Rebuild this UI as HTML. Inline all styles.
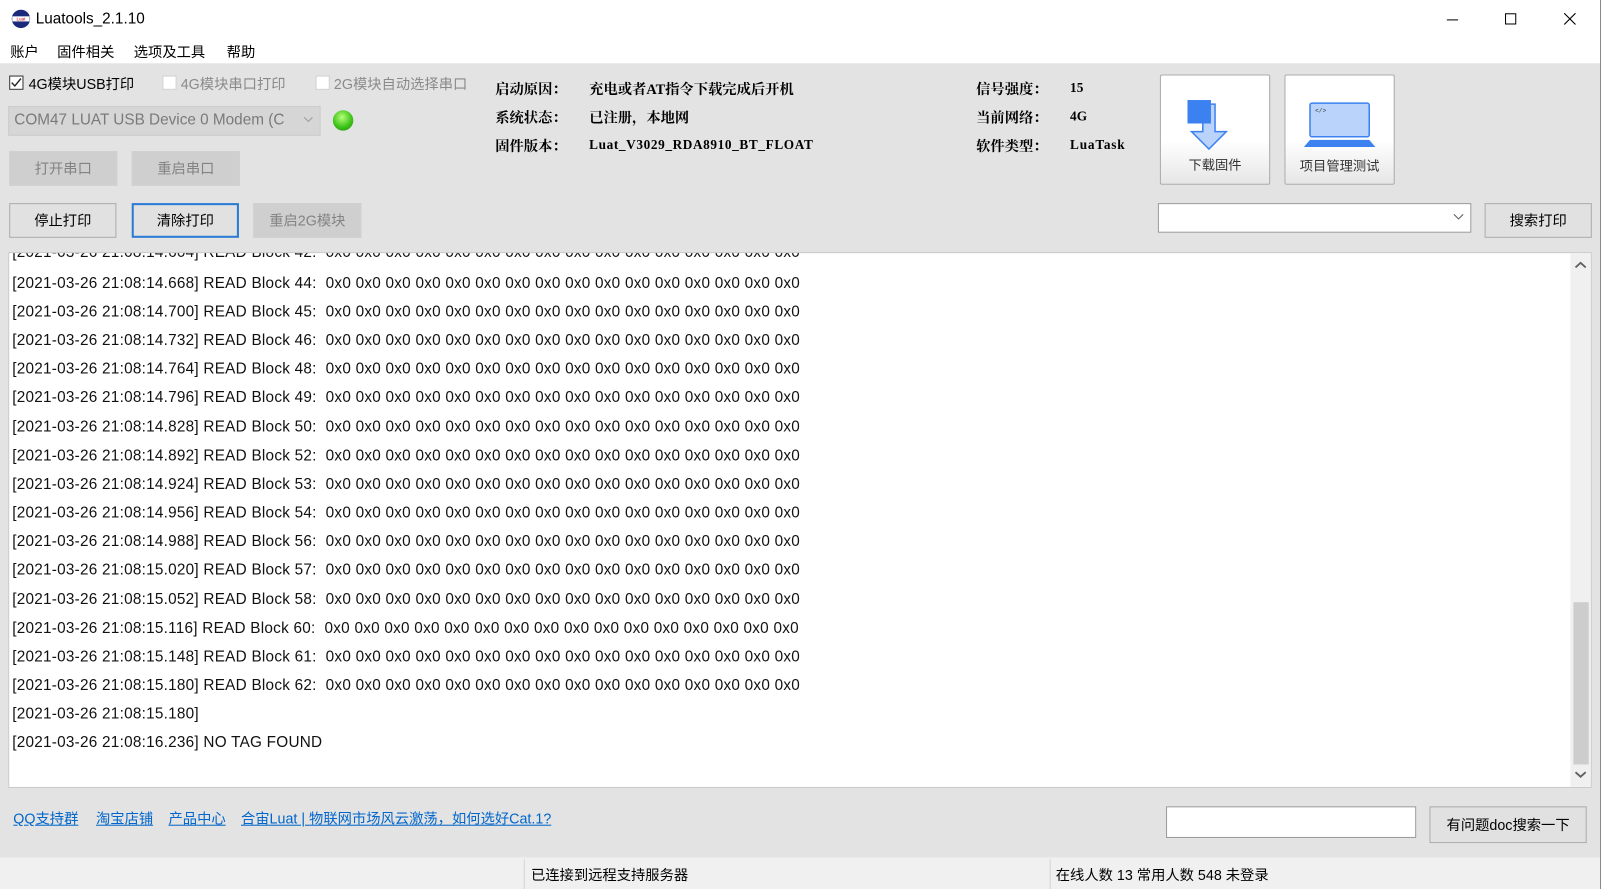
<!DOCTYPE html>
<html><head><meta charset="utf-8">
<style>
html,body{margin:0;padding:0;width:1601px;height:889px;overflow:hidden;background:#3a3030;}
#w{position:absolute;left:0;top:0;width:1568px;height:871px;transform:scale(1.02105,1.02067);transform-origin:0 0;background:#e3e3e3;font-family:"Liberation Sans","Noto Sans CJK SC",sans-serif;color:#000;overflow:hidden;border-right:1px solid #888;box-sizing:border-box}
.a{position:absolute;white-space:nowrap}
.btn{position:absolute;box-sizing:border-box;border:1px solid #adadad;background:#e1e1e1;font-size:14px;text-align:center;}
.dis{border-color:#d0d0d0;background:#cfcfcf;color:#838383}
.cb{position:absolute;width:14px;height:14px;border:1px solid #333;background:#fff;box-sizing:border-box}
.cbd{border-color:#cfcfcf}
.info{font-family:"Liberation Serif","Noto Serif CJK SC",serif;font-weight:bold;font-size:14px}
.log div{position:absolute;left:11px;font-size:15px;white-space:nowrap;color:#111;letter-spacing:0.24px}
.lnk{color:#0066cc;text-decoration:underline;font-size:14px}
</style></head><body>
<div id="w">
<div class="a" style="left:0;top:0;width:1568px;height:62px;background:#fff"></div>
<svg class="a" style="left:11px;top:9px" width="19" height="19" viewBox="0 0 19 19"><circle cx="9.5" cy="9.5" r="9" fill="#1b2a7a"/><rect x="1" y="7" width="17" height="5" fill="#fff"/><text x="9.5" y="11.2" font-size="4.5" text-anchor="middle" fill="#c00" font-family="Liberation Sans">Luat</text></svg>
<div class="a" style="left:35px;top:10px;font-size:15px">Luatools_2.1.10</div>
<div class="a" style="left:1417px;top:19px;width:11px;height:1px;background:#000"></div>
<div class="a" style="left:1474px;top:13px;width:11px;height:11px;border:1px solid #000;box-sizing:border-box"></div>
<svg class="a" style="left:1531px;top:12px" width="13" height="13"><path d="M1 1L12 12M12 1L1 12" stroke="#000" stroke-width="1.1"/></svg>
<div class="a" style="left:10px;top:41px;font-size:14px">账户</div>
<div class="a" style="left:56px;top:41px;font-size:14px">固件相关</div>
<div class="a" style="left:131px;top:41px;font-size:14px">选项及工具</div>
<div class="a" style="left:222px;top:41px;font-size:14px">帮助</div>

<div class="cb" style="left:9px;top:74px"></div>
<svg class="a" style="left:10px;top:75px" width="12" height="12"><path d="M1.5 6L4.5 9.2L10.5 2" stroke="#222" stroke-width="1.4" fill="none"/></svg>
<div class="a" style="left:28px;top:72px;font-size:14px">4G模块USB打印</div>
<div class="cb cbd" style="left:159px;top:74px"></div>
<div class="a" style="left:177px;top:72px;font-size:14px;color:#8a8a8a">4G模块串口打印</div>
<div class="cb cbd" style="left:309px;top:74px"></div>
<div class="a" style="left:327px;top:72px;font-size:14px;color:#8a8a8a">2G模块自动选择串口</div>

<div class="a" style="left:8px;top:104px;width:306px;height:29px;background:#d6d6d6;border:1px solid #cbcbcb;box-sizing:border-box"></div>
<div class="a" style="left:14px;top:109px;font-size:15px;color:#7a7a7a">COM47 LUAT USB Device 0 Modem (C</div>
<svg class="a" style="left:297px;top:114px" width="10" height="7"><path d="M1 1L5 5L9 1" stroke="#999" fill="none"/></svg>
<div class="a" style="left:326px;top:108px;width:20px;height:20px;border-radius:50%;background:radial-gradient(circle at 45% 35%,#b6ff7a,#3fc41a 55%,#1e8a0a)"></div>

<div class="btn dis" style="left:9px;top:148px;width:106px;height:34px;line-height:32px">打开串口</div>
<div class="btn dis" style="left:129px;top:148px;width:106px;height:34px;line-height:32px">重启串口</div>
<div class="btn" style="left:9px;top:199px;width:105px;height:34px;line-height:32px">停止打印</div>
<div class="btn" style="left:129px;top:199px;width:105px;height:34px;line-height:30px;border:2px solid #2a7bd4">清除打印</div>
<div class="btn dis" style="left:248px;top:199px;width:106px;height:34px;line-height:32px">重启2G模块</div>

<div class="a info" style="left:485px;top:77px">启动原因：</div>
<div class="a info" style="left:577px;top:77px">充电或者AT指令下载完成后开机</div>
<div class="a info" style="left:485px;top:105px">系统状态：</div>
<div class="a info" style="left:577px;top:105px">已注册，本地网</div>
<div class="a info" style="left:485px;top:133px">固件版本：</div>
<div class="a info" style="left:577px;top:134px;font-size:13px;letter-spacing:0.6px">Luat_V3029_RDA8910_BT_FLOAT</div>
<div class="a info" style="left:956px;top:77px">信号强度：</div>
<div class="a info" style="left:1048px;top:78px;font-size:13px">15</div>
<div class="a info" style="left:956px;top:105px">当前网络：</div>
<div class="a info" style="left:1048px;top:106px;font-size:13px">4G</div>
<div class="a info" style="left:956px;top:133px">软件类型：</div>
<div class="a info" style="left:1048px;top:134px;font-size:13px;letter-spacing:0.8px">LuaTask</div>

<div class="a" style="left:1136px;top:73px;width:108px;height:108px;border:1px solid #acacac;border-radius:2px;box-sizing:border-box;background:linear-gradient(#fff 60%,#e6e6e6)"></div>
<svg class="a" style="left:1160px;top:95px" width="58" height="52" viewBox="0 0 58 52"><path d="M18 7H30V34H41L24 51L7 34H18Z" fill="#b9d3fb" stroke="#3b82f0" stroke-width="1.5"/><rect x="3" y="3" width="23" height="23" fill="#3b82f0"/></svg>
<div class="a" style="left:1136px;top:151px;width:108px;text-align:center;font-size:13px;color:#333">下载固件</div>
<div class="a" style="left:1258px;top:73px;width:108px;height:108px;border:1px solid #acacac;border-radius:2px;box-sizing:border-box;background:linear-gradient(#fff 60%,#e6e6e6)"></div>
<svg class="a" style="left:1276px;top:99px" width="72" height="46" viewBox="0 0 72 46"><rect x="7" y="2" width="58" height="33" rx="2" fill="#b9d3fb" stroke="#3b82f0" stroke-width="1.5"/><text x="12" y="11" font-size="6" fill="#333" font-family="Liberation Mono">&lt;/&gt;</text><path d="M7 38H65L71 45H1Z" fill="#3b82f0"/></svg>
<div class="a" style="left:1258px;top:152px;width:108px;text-align:center;font-size:13px;color:#333">项目管理测试</div>

<div class="a" style="left:1134px;top:199px;width:307px;height:29px;background:#fff;border:1px solid #999;box-sizing:border-box"></div>
<svg class="a" style="left:1423px;top:209px" width="11" height="7"><path d="M1 1L5.5 5.5L10 1" stroke="#555" fill="none"/></svg>
<div class="btn" style="left:1454px;top:199px;width:105px;height:34px;line-height:32px">搜索打印</div>

<div class="a log" style="left:8px;top:247px;width:1551px;height:525px;background:#fff;border:1px solid #c8c8c8;box-sizing:border-box;overflow:hidden">
<div style="top:-9px;left:3px">[2021-03-26 21:08:14.604] READ Block 42:&nbsp; 0x0 0x0 0x0 0x0 0x0 0x0 0x0 0x0 0x0 0x0 0x0 0x0 0x0 0x0 0x0 0x0</div>
<div style="top:21px;left:3px">[2021-03-26 21:08:14.668] READ Block 44:&nbsp; 0x0 0x0 0x0 0x0 0x0 0x0 0x0 0x0 0x0 0x0 0x0 0x0 0x0 0x0 0x0 0x0</div>
<div style="top:49px;left:3px">[2021-03-26 21:08:14.700] READ Block 45:&nbsp; 0x0 0x0 0x0 0x0 0x0 0x0 0x0 0x0 0x0 0x0 0x0 0x0 0x0 0x0 0x0 0x0</div>
<div style="top:77px;left:3px">[2021-03-26 21:08:14.732] READ Block 46:&nbsp; 0x0 0x0 0x0 0x0 0x0 0x0 0x0 0x0 0x0 0x0 0x0 0x0 0x0 0x0 0x0 0x0</div>
<div style="top:105px;left:3px">[2021-03-26 21:08:14.764] READ Block 48:&nbsp; 0x0 0x0 0x0 0x0 0x0 0x0 0x0 0x0 0x0 0x0 0x0 0x0 0x0 0x0 0x0 0x0</div>
<div style="top:133px;left:3px">[2021-03-26 21:08:14.796] READ Block 49:&nbsp; 0x0 0x0 0x0 0x0 0x0 0x0 0x0 0x0 0x0 0x0 0x0 0x0 0x0 0x0 0x0 0x0</div>
<div style="top:162px;left:3px">[2021-03-26 21:08:14.828] READ Block 50:&nbsp; 0x0 0x0 0x0 0x0 0x0 0x0 0x0 0x0 0x0 0x0 0x0 0x0 0x0 0x0 0x0 0x0</div>
<div style="top:190px;left:3px">[2021-03-26 21:08:14.892] READ Block 52:&nbsp; 0x0 0x0 0x0 0x0 0x0 0x0 0x0 0x0 0x0 0x0 0x0 0x0 0x0 0x0 0x0 0x0</div>
<div style="top:218px;left:3px">[2021-03-26 21:08:14.924] READ Block 53:&nbsp; 0x0 0x0 0x0 0x0 0x0 0x0 0x0 0x0 0x0 0x0 0x0 0x0 0x0 0x0 0x0 0x0</div>
<div style="top:246px;left:3px">[2021-03-26 21:08:14.956] READ Block 54:&nbsp; 0x0 0x0 0x0 0x0 0x0 0x0 0x0 0x0 0x0 0x0 0x0 0x0 0x0 0x0 0x0 0x0</div>
<div style="top:274px;left:3px">[2021-03-26 21:08:14.988] READ Block 56:&nbsp; 0x0 0x0 0x0 0x0 0x0 0x0 0x0 0x0 0x0 0x0 0x0 0x0 0x0 0x0 0x0 0x0</div>
<div style="top:302px;left:3px">[2021-03-26 21:08:15.020] READ Block 57:&nbsp; 0x0 0x0 0x0 0x0 0x0 0x0 0x0 0x0 0x0 0x0 0x0 0x0 0x0 0x0 0x0 0x0</div>
<div style="top:331px;left:3px">[2021-03-26 21:08:15.052] READ Block 58:&nbsp; 0x0 0x0 0x0 0x0 0x0 0x0 0x0 0x0 0x0 0x0 0x0 0x0 0x0 0x0 0x0 0x0</div>
<div style="top:359px;left:3px">[2021-03-26 21:08:15.116] READ Block 60:&nbsp; 0x0 0x0 0x0 0x0 0x0 0x0 0x0 0x0 0x0 0x0 0x0 0x0 0x0 0x0 0x0 0x0</div>
<div style="top:387px;left:3px">[2021-03-26 21:08:15.148] READ Block 61:&nbsp; 0x0 0x0 0x0 0x0 0x0 0x0 0x0 0x0 0x0 0x0 0x0 0x0 0x0 0x0 0x0 0x0</div>
<div style="top:415px;left:3px">[2021-03-26 21:08:15.180] READ Block 62:&nbsp; 0x0 0x0 0x0 0x0 0x0 0x0 0x0 0x0 0x0 0x0 0x0 0x0 0x0 0x0 0x0 0x0</div>
<div style="top:443px;left:3px">[2021-03-26 21:08:15.180]</div>
<div style="top:471px;left:3px">[2021-03-26 21:08:16.236] NO TAG FOUND</div>
<div style="left:1529px;top:0;width:20px;height:523px;background:#f0f0f0"></div>
<div style="left:1532px;top:342px;width:15px;height:159px;background:#cdcdcd"></div>
<svg style="position:absolute;left:1533px;top:8px" width="12" height="8"><path d="M1 6L6 1.5L11 6" stroke="#606060" stroke-width="1.8" fill="none"/></svg>
<svg style="position:absolute;left:1533px;top:507px" width="12" height="8"><path d="M1 1.5L6 6L11 1.5" stroke="#606060" stroke-width="1.8" fill="none"/></svg>
</div>

<div class="a lnk" style="left:13px;top:792px">QQ支持群</div>
<div class="a lnk" style="left:94px;top:792px">淘宝店铺</div>
<div class="a lnk" style="left:165px;top:792px">产品中心</div>
<div class="a lnk" style="left:236px;top:792px">合宙Luat | 物联网市场风云激荡，如何选好Cat.1?</div>
<div class="a" style="left:1142px;top:790px;width:245px;height:31px;background:#fff;border:1px solid #9a9a9a;box-sizing:border-box"></div>
<div class="btn" style="left:1400px;top:790px;width:154px;height:36px;line-height:34px">有问题doc搜索一下</div>

<div class="a" style="left:0;top:840px;width:1568px;height:31px;background:#f0f0f0"></div>
<div class="a" style="left:513px;top:842px;width:1px;height:29px;background:#d4d4d4"></div>
<div class="a" style="left:1028px;top:842px;width:1px;height:29px;background:#d4d4d4"></div>
<div class="a" style="left:520px;top:847px;font-size:14px">已连接到远程支持服务器</div>
<div class="a" style="left:1034px;top:847px;font-size:14px">在线人数 13 常用人数 548 未登录</div>
</div>
</body></html>
